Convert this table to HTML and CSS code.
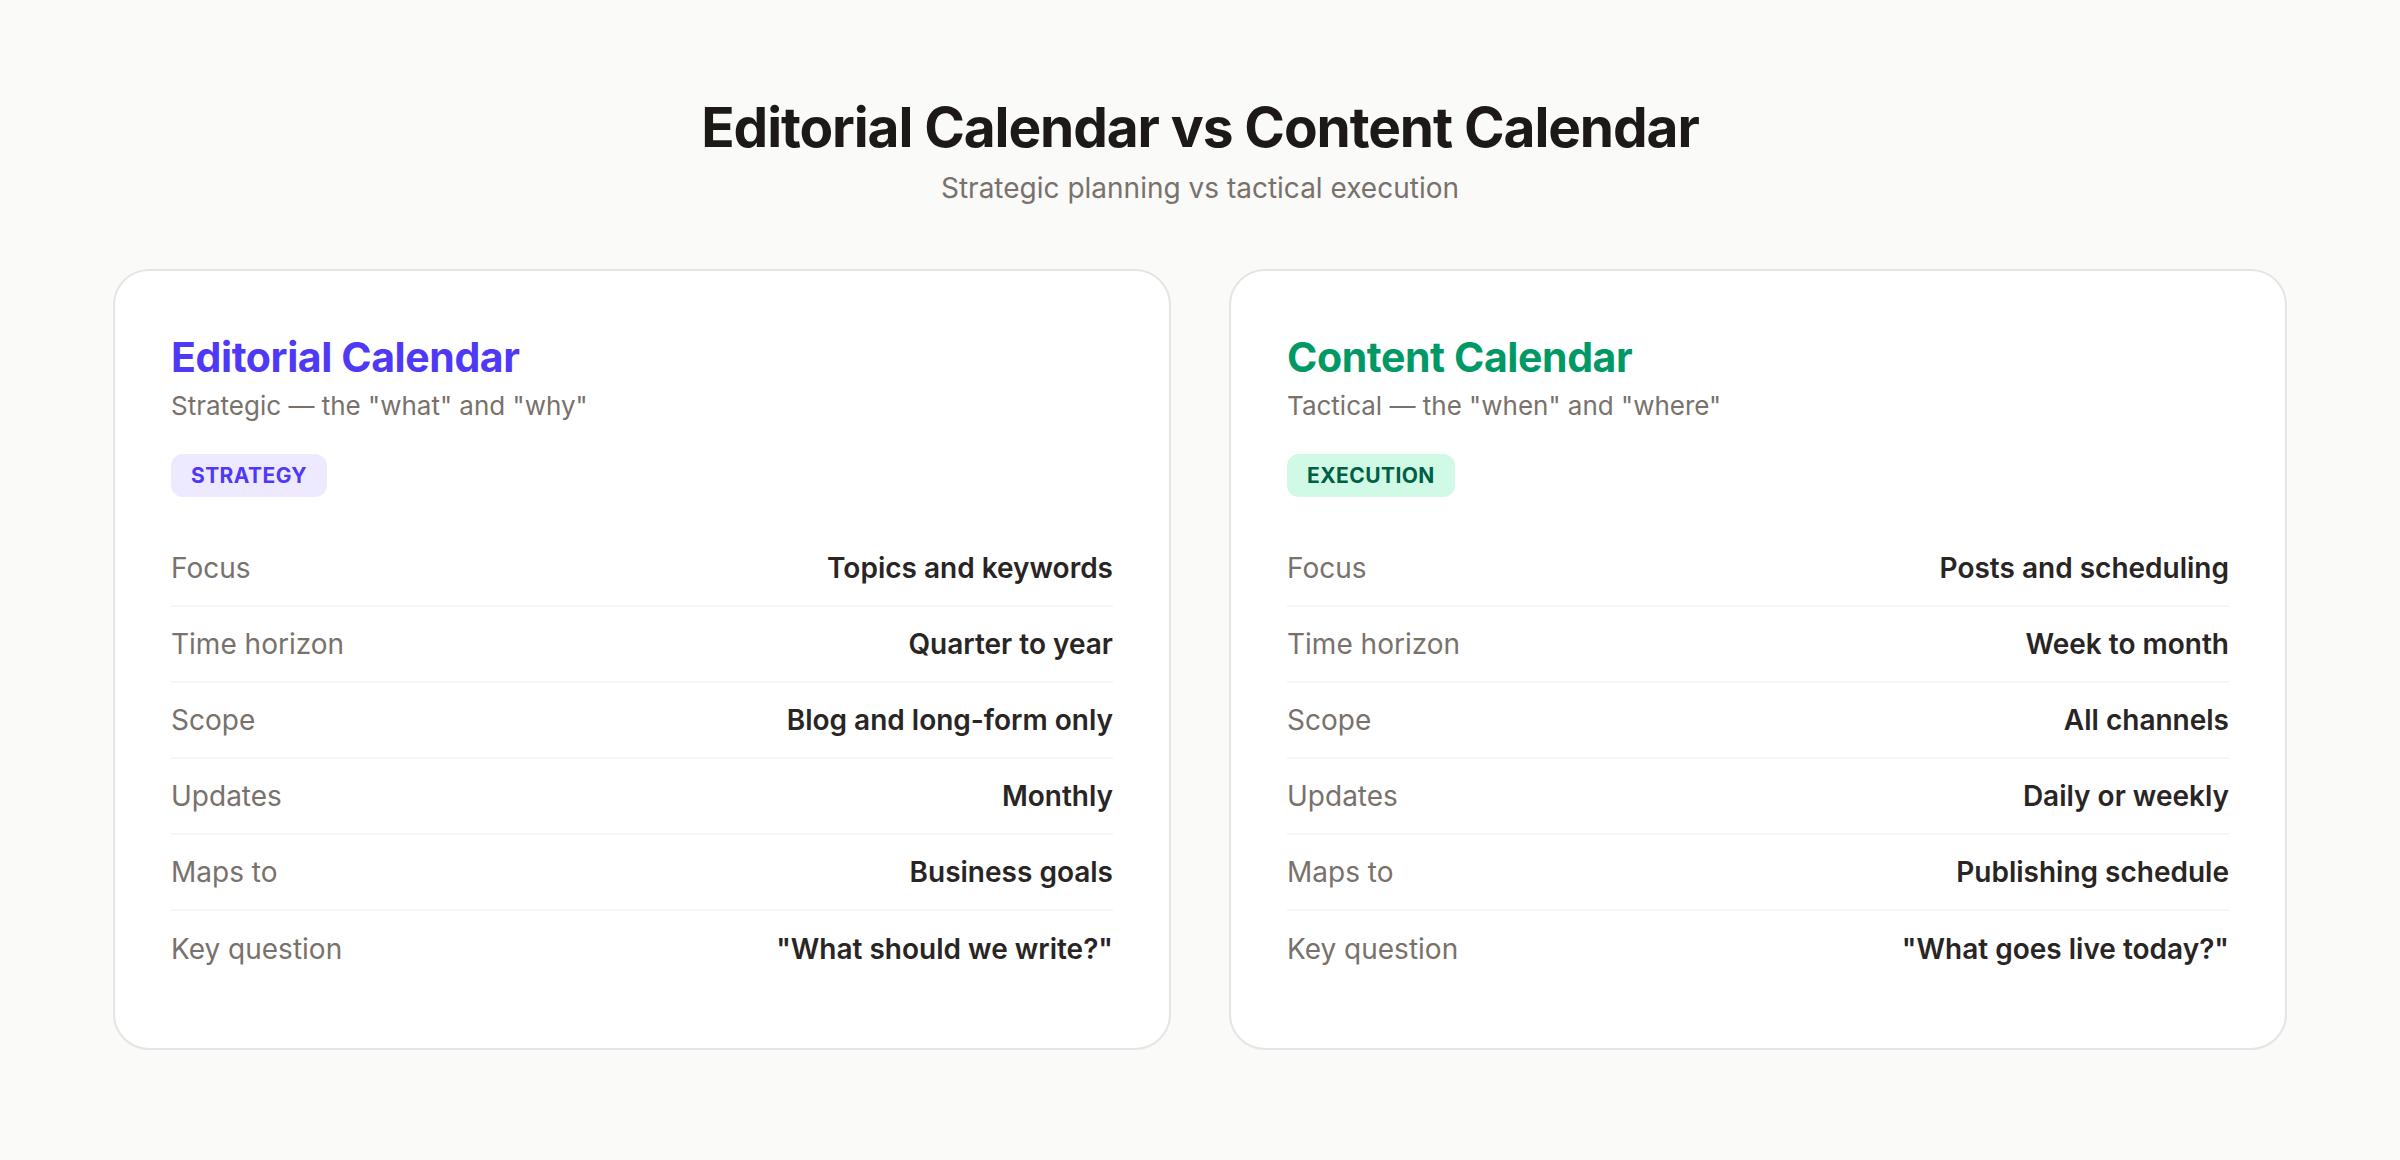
FILE: index.html
```html
<!DOCTYPE html>
<html lang="en">
<head>
<meta charset="utf-8">
<title>Editorial Calendar vs Content Calendar</title>
<link rel="stylesheet" href="styles.css">
</head>
<body>
<main class="page">
  <header class="hero">
    <h1 class="hero-title">Editorial Calendar vs Content Calendar</h1>
    <p class="hero-sub">Strategic planning vs tactical execution</p>
  </header>
  <section class="cards">
    <article class="card card-editorial">
      <h2 class="card-title">Editorial Calendar</h2>
      <p class="card-sub">Strategic — the "what" and "why"</p>
      <span class="badge">STRATEGY</span>
      <dl class="rows">
        <div class="row"><dt>Focus</dt><dd>Topics and keywords</dd></div>
        <div class="row"><dt>Time horizon</dt><dd>Quarter to year</dd></div>
        <div class="row"><dt>Scope</dt><dd>Blog and long-form only</dd></div>
        <div class="row"><dt>Updates</dt><dd>Monthly</dd></div>
        <div class="row"><dt>Maps to</dt><dd>Business goals</dd></div>
        <div class="row"><dt>Key question</dt><dd>"What should we write?"</dd></div>
      </dl>
    </article>
    <article class="card card-content">
      <h2 class="card-title">Content Calendar</h2>
      <p class="card-sub">Tactical — the "when" and "where"</p>
      <span class="badge">EXECUTION</span>
      <dl class="rows">
        <div class="row"><dt>Focus</dt><dd>Posts and scheduling</dd></div>
        <div class="row"><dt>Time horizon</dt><dd>Week to month</dd></div>
        <div class="row"><dt>Scope</dt><dd>All channels</dd></div>
        <div class="row"><dt>Updates</dt><dd>Daily or weekly</dd></div>
        <div class="row"><dt>Maps to</dt><dd>Publishing schedule</dd></div>
        <div class="row"><dt>Key question</dt><dd>"What goes live today?"</dd></div>
      </dl>
    </article>
  </section>
</main>
</body>
</html>
```
FILE: styles.css
```css
* { box-sizing: border-box; }
html, body { margin: 0; padding: 0; }
body {
  background: #fafaf9;
  font-family: Inter, "Noto Sans", "Liberation Sans", sans-serif;
  color: #1c1917;
}
.page {
  width: 2174px;
  margin: 0 auto;
  padding-top: 96px;
}
.hero { text-align: center; }
.hero-title {
  margin: 0;
  font-size: 55px;
  line-height: 62px;
  font-weight: 700;
  letter-spacing: -0.02em;
  color: #1c1917;
}
.hero-sub {
  margin: 14px 0 0;
  font-size: 28px;
  line-height: 32px;
  color: #79716b;
}
.cards {
  margin-top: 65px;
  display: grid;
  grid-template-columns: 1fr 1fr;
  gap: 58px;
}
.card {
  background: #fff;
  border: 2px solid #e7e5e4;
  border-radius: 36px;
  padding: 62px 56px 61px;
  display: flex;
  flex-direction: column;
  align-items: flex-start;
}
.card-title {
  margin: 0;
  font-size: 41px;
  line-height: 48px;
  font-weight: 700;
  letter-spacing: -0.01em;
}
.card-editorial .card-title { color: #4f39f6; }
.card-content .card-title { color: #009966; }
.card-sub {
  margin: 8px 0 0;
  font-size: 26px;
  line-height: 34px;
  color: #79716b;
}
.badge {
  margin-top: 31px;
  display: inline-block;
  padding: 0 20px;
  height: 43px;
  line-height: 43px;
  border-radius: 12px;
  font-size: 21px;
  font-weight: 700;
  letter-spacing: 0.02em;
}
.card-editorial .badge { background: #ede9fe; color: #4f39f6; }
.card-content .badge { background: #d0fae5; color: #006045; }
.rows {
  margin: 34px 0 0;
  width: 100%;
}
.row {
  display: flex;
  justify-content: space-between;
  align-items: center;
  height: 76px;
  border-bottom: 2px solid #f5f5f4;
  font-size: 28px;
}
.row:last-child { border-bottom: none; }
.row dt { color: #79716b; }
.row dd { margin: 0; font-weight: 600; color: #292524; }
```
